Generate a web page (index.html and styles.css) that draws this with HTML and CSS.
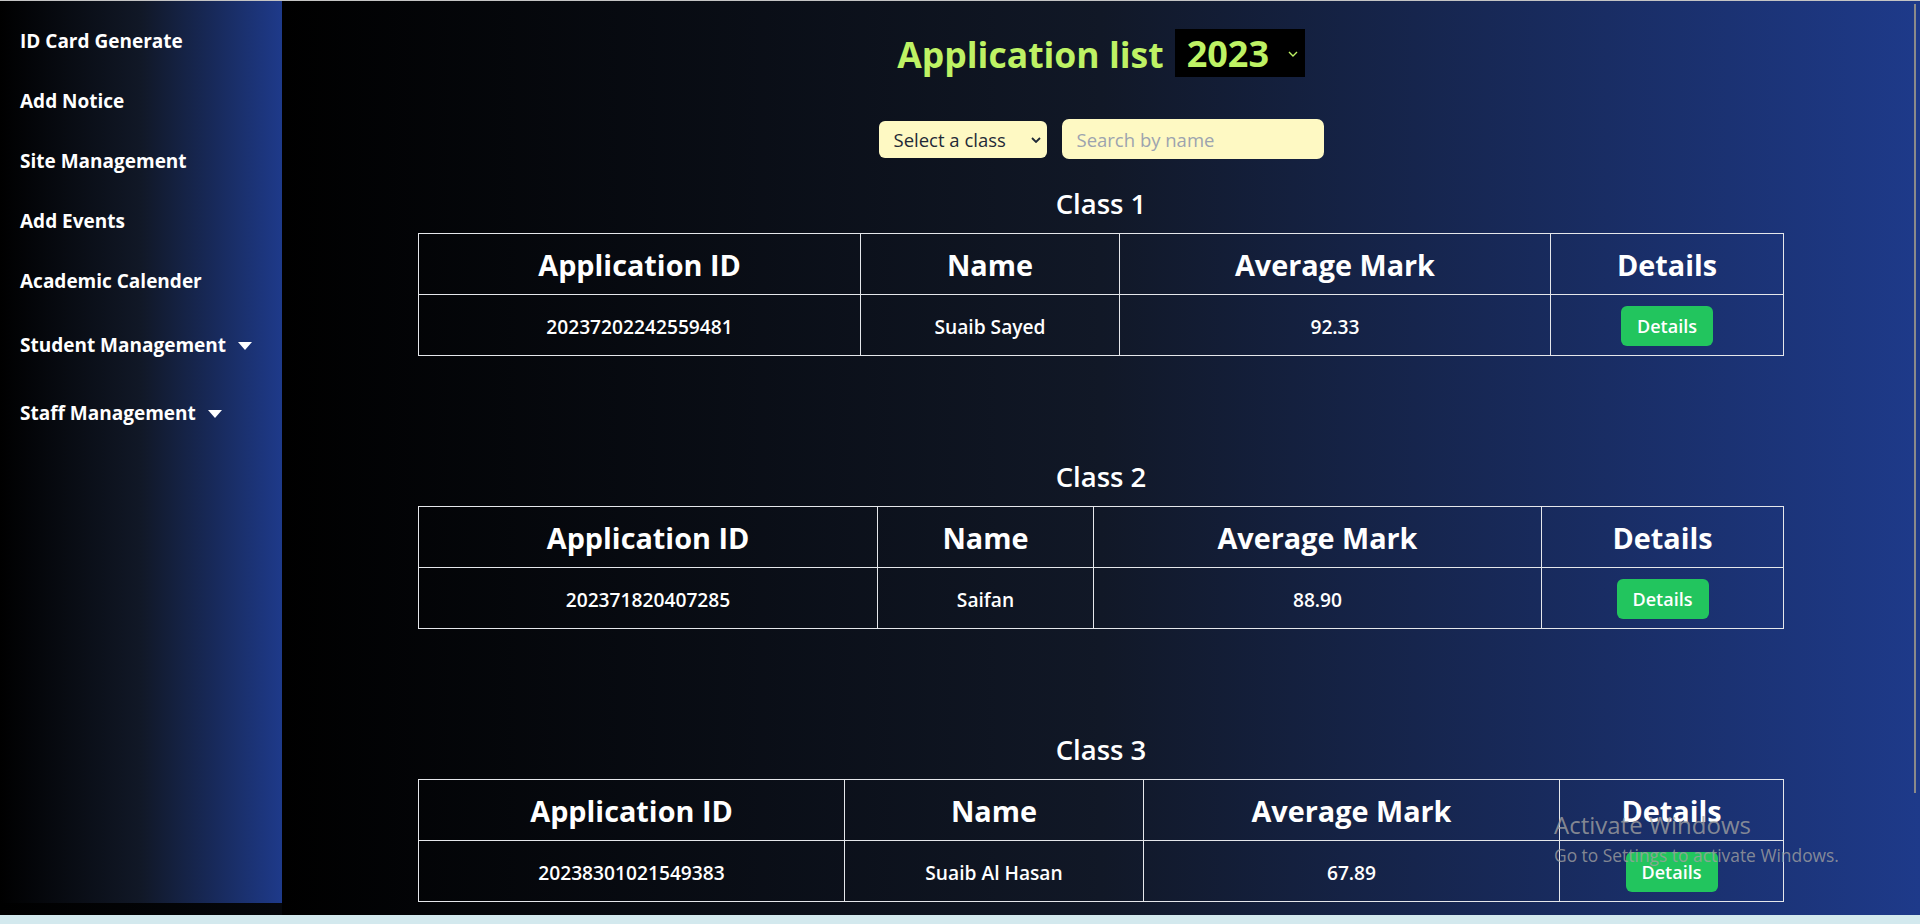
FILE: index.html
```html
<!DOCTYPE html>
<html lang="en">
<head>
<meta charset="utf-8">
<title>Application list</title>
<link rel="stylesheet" href="styles.css">
</head>
<body>
<div class="app">
  <aside class="sidebar">
    <nav class="nav">
      <a class="nav-item" href="#">ID Card Generate</a>
      <a class="nav-item" href="#">Add Notice</a>
      <a class="nav-item" href="#">Site Management</a>
      <a class="nav-item" href="#">Add Events</a>
      <a class="nav-item" href="#">Academic Calender</a>
      <button class="nav-item nav-drop" type="button">Student Management
        <svg class="caret" width="14" height="8" viewBox="0 0 14 8"><polygon points="0,0 14,0 7,8" fill="#ffffff"/></svg>
      </button>
      <button class="nav-item nav-drop" type="button">Staff Management
        <svg class="caret" width="14" height="8" viewBox="0 0 14 8"><polygon points="0,0 14,0 7,8" fill="#ffffff"/></svg>
      </button>
    </nav>
  </aside>

  <main class="main">
    <h1 class="title">
      <span class="title-text">Application list</span>
      <span class="year-wrap">
        <select class="year-select"><option>2023</option><option>2022</option></select>
        <svg class="year-chevron" width="10" height="6" viewBox="0 0 10 6"><polyline points="1,1 5,5 9,1" fill="none" stroke="#bef264" stroke-width="1.4"/></svg>
      </span>
    </h1>

    <div class="filters">
      <span class="class-wrap">
        <select class="class-select"><option>Select a class</option><option>Class 1</option><option>Class 2</option><option>Class 3</option></select>
        <svg class="class-chevron" width="10" height="6" viewBox="0 0 10 6"><polyline points="1,1 5,5 9,1" fill="none" stroke="#1f2937" stroke-width="1.8"/></svg>
      </span>
      <input class="search" type="text" placeholder="Search by name">
    </div>

    <section class="class-block">
      <h2 class="class-title">Class 1</h2>
      <table class="apps apps-1">
        <colgroup><col class="c1"><col class="c2"><col class="c3"><col class="c4"></colgroup>
        <thead><tr><th>Application ID</th><th>Name</th><th>Average Mark</th><th>Details</th></tr></thead>
        <tbody><tr><td>20237202242559481</td><td>Suaib Sayed</td><td>92.33</td><td><button class="details-btn" type="button">Details</button></td></tr></tbody>
      </table>
    </section>

    <section class="class-block">
      <h2 class="class-title">Class 2</h2>
      <table class="apps apps-2">
        <colgroup><col class="c1"><col class="c2"><col class="c3"><col class="c4"></colgroup>
        <thead><tr><th>Application ID</th><th>Name</th><th>Average Mark</th><th>Details</th></tr></thead>
        <tbody><tr><td>202371820407285</td><td>Saifan</td><td>88.90</td><td><button class="details-btn" type="button">Details</button></td></tr></tbody>
      </table>
    </section>

    <section class="class-block">
      <h2 class="class-title">Class 3</h2>
      <table class="apps apps-3">
        <colgroup><col class="c1"><col class="c2"><col class="c3"><col class="c4"></colgroup>
        <thead><tr><th>Application ID</th><th>Name</th><th>Average Mark</th><th>Details</th></tr></thead>
        <tbody><tr><td>20238301021549383</td><td>Suaib Al Hasan</td><td>67.89</td><td><button class="details-btn" type="button">Details</button></td></tr></tbody>
      </table>
    </section>
  </main>

  <div class="scroll-thumb"></div>
  <div class="watermark">
    <div class="wm-title">Activate Windows</div>
    <div class="wm-sub">Go to Settings to activate Windows.</div>
  </div>
</div>
<div class="bottom-bar"></div>
</body>
</html>
```

FILE: styles.css
```css
html, body {
  margin: 0;
  padding: 0;
}

body {
  width: 1920px;
  height: 924px;
  overflow: hidden;
  background: #d3e9ee;
  font-family: "Open Sans", "Noto Sans", sans-serif;
  color: #ffffff;
}

.app {
  position: relative;
  display: flex;
  height: 914px;
  border-top: 1px solid #c4c4c4;
  overflow: hidden;
  background: linear-gradient(to right, #000000, #111827, #1e3a8a);
}

/* Sidebar */
.sidebar {
  flex: 0 0 282px;
  width: 282px;
  height: 902px;
  align-self: flex-start;
  background: linear-gradient(to right, #000000, #111827, #1e3a8a);
}

.nav {
  display: flex;
  flex-direction: column;
  padding-top: 10px;
}

.nav-item {
  display: flex;
  align-items: center;
  height: 60px;
  padding: 0 0 0 20px;
  font-family: "Open Sans", "Noto Sans", sans-serif;
  font-size: 19px;
  font-weight: 700;
  color: #ffffff;
  text-decoration: none;
  background: none;
  border: 0;
  text-align: left;
  cursor: pointer;
}

.nav-drop {
  height: 68px;
  gap: 12px;
}

.caret {
  display: block;
  margin-top: 1px;
}

/* Main */
.main {
  flex: 1 1 auto;
  display: flex;
  flex-direction: column;
  align-items: center;
  padding-top: 28px;
  padding-bottom: 160px;
  background: linear-gradient(to right, #000000, #111827, #1e3a8a);
}

.title {
  display: flex;
  align-items: center;
  gap: 11px;
  height: 48px;
  margin: 0;
  font-size: 35.5px;
  font-weight: 700;
  color: #bef264;
}

.title-text {
  line-height: 48px;
  padding-top: 2px;
}

.year-wrap {
  position: relative;
  display: block;
  width: 130px;
  height: 48px;
}

.year-select {
  appearance: none;
  -webkit-appearance: none;
  display: block;
  width: 130px;
  height: 48px;
  margin: 0;
  padding: 2px 0 0 12px;
  border: 0;
  border-radius: 0;
  background: #000000;
  color: #bef264;
  font-family: "Open Sans", "Noto Sans", sans-serif;
  font-size: 36px;
  font-weight: 700;
  line-height: 46px;
  outline: none;
}

.year-chevron {
  position: absolute;
  left: 113px;
  top: 22px;
  pointer-events: none;
}

.filters {
  display: flex;
  align-items: center;
  gap: 15px;
  margin-top: 42px;
  height: 40px;
}

.class-wrap {
  position: relative;
  display: block;
  width: 168px;
  height: 37px;
}

.class-select {
  appearance: none;
  -webkit-appearance: none;
  display: block;
  width: 168px;
  height: 37px;
  margin: 0;
  padding: 0 0 0 15px;
  border: 0;
  border-radius: 6px;
  background: #fef9c3;
  color: #1f2937;
  font-family: "Open Sans", "Noto Sans", sans-serif;
  font-size: 18.5px;
  outline: none;
}

.class-chevron {
  position: absolute;
  left: 152px;
  top: 16px;
  pointer-events: none;
}

.search {
  box-sizing: border-box;
  width: 262px;
  height: 40px;
  margin: 0;
  padding: 0 15px;
  border: 0;
  border-radius: 7px;
  background: #fef9c3;
  color: #1f2937;
  font-family: "Open Sans", "Noto Sans", sans-serif;
  font-size: 18.5px;
  outline: none;
}

.search::placeholder {
  color: #9ca3af;
}

/* Class sections */
.class-block {
  display: flex;
  flex-direction: column;
  align-items: center;
  margin-top: 103px;
}

.filters + .class-block {
  margin-top: 27px;
}

.class-title {
  margin: 0 0 11px;
  font-size: 27.5px;
  font-weight: 600;
  line-height: 36px;
  color: #ffffff;
}

.apps {
  width: 1365px;
  table-layout: fixed;
  border-collapse: collapse;
  color: #ffffff;
}

.apps th,
.apps td {
  border: 1px solid #e5e7eb;
  padding: 0;
  height: 60px;
  text-align: center;
  vertical-align: middle;
}

.apps th {
  font-size: 28.8px;
  font-weight: 700;
}

.apps td {
  font-size: 19.2px;
  font-weight: 600;
  height: 58px;
  padding-top: 2px;
}

.apps-1 .c1 { width: 442px; }
.apps-1 .c2 { width: 259px; }
.apps-1 .c3 { width: 431px; }
.apps-1 .c4 { width: 233px; }

.apps-2 .c1 { width: 459px; }
.apps-2 .c2 { width: 216px; }
.apps-2 .c3 { width: 448px; }
.apps-2 .c4 { width: 242px; }

.apps-3 .c1 { width: 426px; }
.apps-3 .c2 { width: 299px; }
.apps-3 .c3 { width: 416px; }
.apps-3 .c4 { width: 224px; }

.details-btn {
  display: inline-block;
  width: 92px;
  height: 40px;
  padding: 0;
  border: 0;
  border-radius: 6px;
  background: #22c55e;
  color: #ffffff;
  font-family: "Open Sans", "Noto Sans", sans-serif;
  font-size: 18px;
  font-weight: 600;
  vertical-align: middle;
  cursor: pointer;
}

/* Overlays */
.scroll-thumb {
  position: absolute;
  left: 1914px;
  top: 3px;
  width: 2px;
  height: 789px;
  background: #8a8a8a;
}

.watermark {
  position: absolute;
  left: 1554px;
  top: 810px;
  color: rgba(160, 160, 160, 0.8);
  pointer-events: none;
}

.wm-title {
  font-size: 24px;
  line-height: 28px;
}

.wm-sub {
  margin-top: 5px;
  font-size: 17.4px;
  line-height: 22px;
}

.bottom-bar {
  height: 9px;
  background: #d3e9ee;
}
```
